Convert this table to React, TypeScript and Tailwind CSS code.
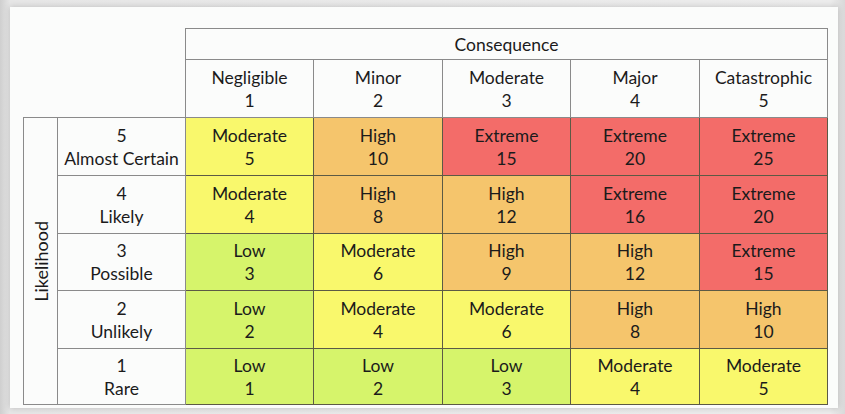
import React from "react";

type Level = "Low" | "Moderate" | "High" | "Extreme";

const bg: Record<Level, string> = {
  Low: "bg-[#d6f46b]",
  Moderate: "bg-[#f9f86c]",
  High: "bg-[#f5c56c]",
  Extreme: "bg-[#f36c69]",
};

const levelFor = (n: number): Level =>
  n >= 15 ? "Extreme" : n >= 8 ? "High" : n >= 4 ? "Moderate" : "Low";

const cons = [
  ["Negligible", 1],
  ["Minor", 2],
  ["Moderate", 3],
  ["Major", 4],
  ["Catastrophic", 5],
] as const;

const rows: { n: number; label: string; h: string; levels: Level[] }[] = [
  { n: 5, label: "Almost Certain", h: "h-[58px]", levels: ["Moderate", "High", "Extreme", "Extreme", "Extreme"] },
  { n: 4, label: "Likely", h: "h-[58px]", levels: ["Moderate", "High", "High", "Extreme", "Extreme"] },
  { n: 3, label: "Possible", h: "h-[57px]", levels: ["Low", "Moderate", "High", "High", "Extreme"] },
  { n: 2, label: "Unlikely", h: "h-[58px]", levels: ["Low", "Moderate", "Moderate", "High", "High"] },
  { n: 1, label: "Rare", h: "h-[56px]", levels: ["Low", "Low", "Low", "Moderate", "Moderate"] },
];

export default function App() {
  void levelFor;
  return (
    <div className="w-[845px] h-[414px] overflow-hidden bg-[linear-gradient(90deg,#cfcfcf_0px,#e6e6e6_10px,#ececec_830px,#d9d9d9_845px)] pt-[7px] pl-[10px] font-['Lato',sans-serif] text-[#1b1b1b]">
      <div className="w-[828px] h-[401px] bg-[#fbfcfb] shadow-[0_0_6px_rgba(0,0,0,0.18)] pt-[21px] pl-[13px]">
        <table className="table-fixed border-collapse text-[17.5px] leading-[23px] text-center">
          <colgroup>
            <col className="w-[34px]" />
            <col className="w-[128px]" />
            <col className="w-[128px]" />
            <col className="w-[129px]" />
            <col className="w-[128px]" />
            <col className="w-[129px]" />
            <col className="w-[128px]" />
          </colgroup>
          <tbody>
            <tr className="h-[31px]">
              <td colSpan={2} rowSpan={2} />
              <td colSpan={5} className="border border-[#8a8a8a] align-middle">
                Consequence
              </td>
            </tr>
            <tr className="h-[58px]">
              {cons.map(([name, n]) => (
                <td key={name} className="border border-[#8a8a8a] align-middle">
                  <div>{name}</div>
                  <div>{n}</div>
                </td>
              ))}
            </tr>
            {rows.map((r, ri) => (
              <tr key={r.n} className={r.h}>
                {ri === 0 && (
                  <td rowSpan={5} className="border border-[#8a8a8a] align-middle p-0">
                    <div className="flex justify-center items-center">
                      <span className="[writing-mode:vertical-rl] rotate-180 text-[18px] leading-none">
                        Likelihood
                      </span>
                    </div>
                  </td>
                )}
                <td className="border border-[#8a8a8a] align-middle">
                  <div>{r.n}</div>
                  <div>{r.label}</div>
                </td>
                {r.levels.map((lv, ci) => (
                  <td
                    key={ci}
                    className={`border border-[#5c5a45] align-middle ${bg[lv]}`}
                  >
                    <div>{lv}</div>
                    <div>{r.n * (ci + 1)}</div>
                  </td>
                ))}
              </tr>
            ))}
          </tbody>
        </table>
      </div>
    </div>
  );
}
